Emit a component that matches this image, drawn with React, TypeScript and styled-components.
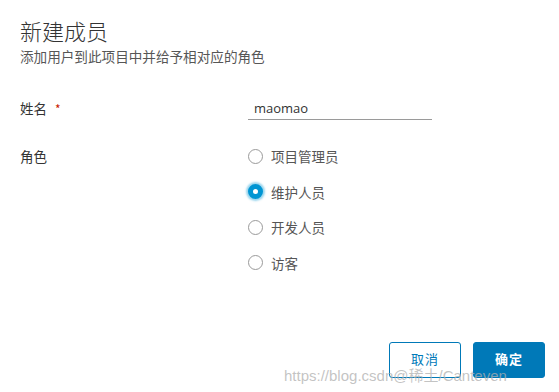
import React, { useState } from 'react'
import styled, { createGlobalStyle } from 'styled-components'

const GlobalStyle = createGlobalStyle`
  html, body {
    margin: 0;
    padding: 0;
    background: #ffffff;
  }
  body {
    font-family: "Open Sans", "Noto Sans CJK SC", sans-serif;
  }
`

const Modal = styled.div`
  position: relative;
  width: 559px;
  height: 392px;
  box-sizing: border-box;
  padding: 15px 14px 0 20px;
  display: flex;
  flex-direction: column;
  overflow: hidden;
`

const Title = styled.h2`
  margin: 0;
  font-family: "Noto Sans CJK SC", sans-serif;
  font-weight: 300;
  font-size: 22px;
  line-height: 30px;
  color: #333333;
`

const Subtitle = styled.p`
  margin: 2px 0 0;
  font-family: "Noto Sans CJK SC", sans-serif;
  font-size: 13.6px;
  line-height: 18px;
  color: #565656;
`

const Form = styled.div`
  margin-top: 31px;
  display: grid;
  grid-template-columns: 228px 1fr;
  row-gap: 14px;
`

const Label = styled.div<{ $top?: number }>`
  font-family: "Noto Sans CJK SC", sans-serif;
  font-size: 13.5px;
  color: #333333;
  line-height: 24px;
  padding-top: ${p => p.$top ?? 0}px;
`

const Required = styled.span`
  color: #c92100;
  margin-left: 8px;
  font-size: 12px;
`

const Input = styled.input`
  width: 184px;
  box-sizing: border-box;
  border: none;
  border-bottom: 1px solid #9a9a9a;
  padding: 0 6px;
  height: 24px;
  font-family: "Open Sans", sans-serif;
  font-size: 13px;
  color: #333333;
  outline: none;
  background: transparent;
`

const RadioGroup = styled.div`
  display: flex;
  flex-direction: column;
  gap: 11.5px;
  padding-top: 9px;
`

const RadioRow = styled.label`
  display: flex;
  align-items: center;
  gap: 8px;
  height: 24px;
  font-family: "Noto Sans CJK SC", sans-serif;
  font-size: 13.5px;
  color: #565656;
  cursor: pointer;
`

const RadioDot = styled.span<{ $checked: boolean }>`
  width: 15px;
  height: 15px;
  flex-shrink: 0;
  box-sizing: border-box;
  border-radius: 50%;
  border: ${p => (p.$checked ? '5.5px solid #0095d3' : '1px solid #9a9a9a')};
  background: #ffffff;
  box-shadow: ${p => (p.$checked ? '0 0 2px 2px rgba(0, 149, 211, 0.4)' : 'none')};
`

const Footer = styled.div`
  margin-top: auto;
  margin-bottom: 14px;
  display: flex;
  justify-content: flex-end;
  gap: 12px;
`

const Button = styled.button<{ $primary?: boolean }>`
  width: 72px;
  height: 36px;
  border-radius: 3px;
  border: 1px solid #0079b8;
  background: ${p => (p.$primary ? '#0079b8' : '#ffffff')};
  color: ${p => (p.$primary ? '#ffffff' : '#0079b8')};
  font-family: "Noto Sans CJK SC", sans-serif;
  font-size: 13px;
  font-weight: ${p => (p.$primary ? 600 : 400)};
  letter-spacing: 1px;
  padding-bottom: 4px;
  cursor: pointer;
`

const Watermark = styled.div`
  position: absolute;
  left: 284px;
  bottom: 7px;
  font-family: "Liberation Sans", "Noto Sans CJK SC", sans-serif;
  font-size: 15px;
  color: rgba(175, 175, 175, 0.75);
  white-space: nowrap;
  pointer-events: none;
`

const roles = ['项目管理员', '维护人员', '开发人员', '访客']

export default function App() {
  const [role, setRole] = useState('维护人员')
  const [name, setName] = useState('maomao')

  return (
    <>
      <GlobalStyle />
      <Modal>
        <Title>新建成员</Title>
        <Subtitle>添加用户到此项目中并给予相对应的角色</Subtitle>
        <Form>
          <Label>
            姓名<Required>*</Required>
          </Label>
          <Input value={name} onChange={e => setName(e.target.value)} />
          <Label $top={9}>角色</Label>
          <RadioGroup>
            {roles.map(r => (
              <RadioRow key={r} onClick={() => setRole(r)}>
                <RadioDot $checked={role === r} />
                {r}
              </RadioRow>
            ))}
          </RadioGroup>
        </Form>
        <Footer>
          <Button>取消</Button>
          <Button $primary>确定</Button>
        </Footer>
        <Watermark>https://blog.csdn@稀土/Canteven</Watermark>
      </Modal>
    </>
  )
}
